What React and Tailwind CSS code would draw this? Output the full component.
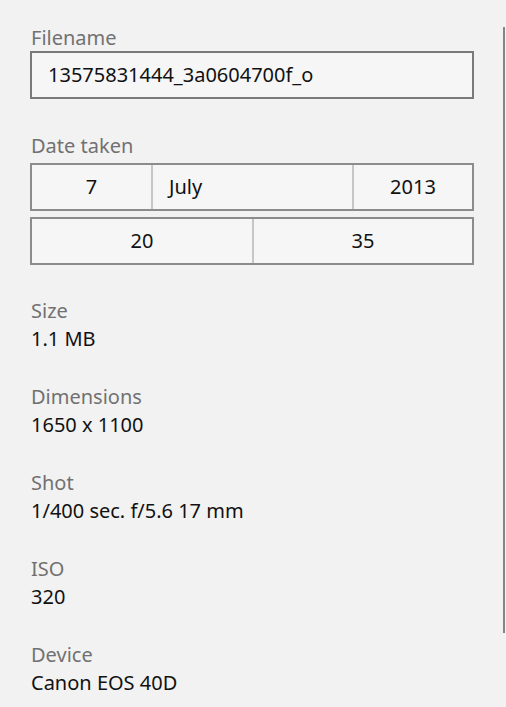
import React from 'react';

const font = { fontFamily: '"Noto Sans", "Open Sans", sans-serif' };

function Field({ label, value }) {
  return (
    <div className="mt-[30px]">
      <div className="text-[20px] leading-[28px] text-[#717171]">{label}</div>
      <div className="text-[20px] leading-[28px] text-[#111]">{value}</div>
    </div>
  );
}

export default function App() {
  const details = [
    ['Size', '1.1 MB'],
    ['Dimensions', '1650 x 1100'],
    ['Shot', '1/400 sec. f/5.6 17 mm'],
    ['ISO', '320'],
    ['Device', 'Canon EOS 40D'],
  ];

  return (
    <div
      className="relative w-[506px] h-[707px] overflow-hidden bg-[#f2f2f2] pl-[30px] pt-[24px]"
      style={font}
    >
      <div className="w-[444px]">
        {/* Filename */}
        <div className="text-[20px] leading-[28px] text-[#717171] pl-px">Filename</div>
        <div className="-mt-px h-[48px] border-2 border-[#7a7a7a] bg-[#f6f6f6] flex items-center pl-4 text-[20px] text-[#111]">
          13575831444_3a0604700f_o
        </div>

        {/* Date taken */}
        <div className="mt-[33px] text-[20px] leading-[28px] text-[#717171] pl-px">Date taken</div>
        <div className="mt-[3px] h-[48px] border-2 border-[#8c8c8c] bg-[#f6f6f6] flex text-[20px] text-[#111]">
          <div className="w-[119px] flex items-center justify-center">7</div>
          <div className="w-[2px] bg-[#c6c6c6]" />
          <div className="w-[199px] flex items-center pl-4">July</div>
          <div className="w-[2px] bg-[#c6c6c6]" />
          <div className="flex-1 flex items-center justify-center">2013</div>
        </div>
        <div className="mt-[6px] h-[48px] border-2 border-[#8c8c8c] bg-[#f6f6f6] flex text-[20px] text-[#111]">
          <div className="w-[220px] flex items-center justify-center">20</div>
          <div className="w-[2px] bg-[#c6c6c6]" />
          <div className="flex-1 flex items-center justify-center">35</div>
        </div>

        <div className="pl-px pt-[2px]">
          {details.map(([label, value]) => (
            <Field key={label} label={label} value={value} />
          ))}
        </div>
      </div>

      {/* scrollbar */}
      <div className="absolute left-[503px] top-[27px] w-[2px] h-[606px] bg-[#858585]" />
    </div>
  );
}
